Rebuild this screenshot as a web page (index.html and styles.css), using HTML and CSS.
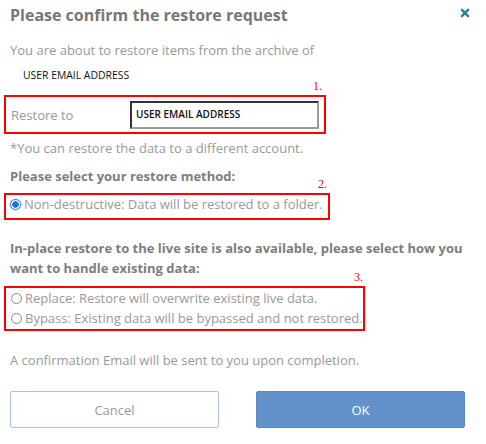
FILE: index.html
```html
<!DOCTYPE html>
<html>
<head>
<meta charset="utf-8">
<link rel="stylesheet" href="styles.css">
</head>
<body>
<div class="dialog">
  <div class="header">
    <h1 class="title">Please confirm the restore request</h1>
    <span class="close" aria-label="Close">
      <svg width="10" height="10" viewBox="0 0 10 10"><path d="M1.2 1.2 L8.8 8.8 M8.8 1.2 L1.2 8.8" stroke="#2f7b95" stroke-width="2.4" stroke-linecap="butt"/></svg>
    </span>
  </div>
  <p class="intro">You are about to restore items from the archive of</p>
  <p class="account">USER EMAIL ADDRESS</p>
  <div class="marked">
    <span class="num n1">1.</span>
    <div class="box box1">
      <span class="label">Restore to</span>
      <div class="input">USER EMAIL ADDRESS</div>
    </div>
  </div>
  <p class="note">*You can restore the data to a different account.</p>
  <p class="heading h1">Please select your restore method:</p>
  <div class="marked">
    <span class="num n2">2.</span>
    <div class="box box2">
      <label class="opt"><span class="radio checked"></span>Non-destructive: Data will be restored to a folder.</label>
    </div>
  </div>
  <p class="heading h2">In-place restore to the live site is also available, please select how you want to handle existing data:</p>
  <div class="marked">
    <span class="num n3">3.</span>
    <div class="box box3">
      <label class="opt"><span class="radio"></span>Replace: Restore will overwrite existing live data.</label>
      <label class="opt"><span class="radio"></span>Bypass: Existing data will be bypassed and not restored.</label>
    </div>
  </div>
  <p class="confirm">A confirmation Email will be sent to you upon completion.</p>
  <div class="buttons">
    <button class="btn cancel">Cancel</button>
    <button class="btn ok">OK</button>
  </div>
</div>
</body>
</html>
```
FILE: styles.css
```css
html, body {
  margin: 0;
  padding: 0;
  background: #ffffff;
}
.dialog {
  width: 486px;
  height: 444px;
  box-sizing: border-box;
  padding: 0 0 0 10px;
  font-family: "Open Sans", "Liberation Sans", sans-serif;
  color: #999999;
  font-size: 13px;
  overflow: hidden;
}
p { margin: 0; }
.header {
  display: flex;
  justify-content: space-between;
  align-items: flex-start;
  padding-top: 4px;
  padding-right: 16px;
}
.title {
  margin: 0;
  font-size: 16px;
  font-weight: 700;
  color: #777777;
  line-height: 22px;
}
.close {
  display: block;
  margin-top: 4px;
  width: 10px;
  height: 10px;
}
.close svg { display: block; }
.intro {
  margin-top: 14px;
  line-height: 20px;
}
.account {
  margin-top: 8px;
  margin-left: 13px;
  font-size: 10.4px;
  color: #111111;
  line-height: 14px;
}
.marked {
  position: relative;
  margin-left: -6px;
}
.num {
  position: absolute;
  top: -15px;
  font-family: "Liberation Serif", serif;
  font-size: 12px;
  color: #ff0000;
  line-height: 12px;
}
.n1 { left: 309px; }
.n2 { left: 314px; }
.n3 { left: 350px; }
.box {
  border: 2px solid #ff0000;
  box-sizing: border-box;
}
.box1 {
  margin-top: 13px;
  width: 322px;
  height: 39px;
  display: flex;
  align-items: center;
  padding-left: 5px;
}
.label {
  width: 119px;
  line-height: 20px;
}
.input {
  width: 189px;
  height: 28px;
  box-sizing: border-box;
  border-style: solid;
  border-width: 2px;
  border-color: #333333 #9a9a9a #9a9a9a #333333;
  font-size: 10px;
  font-weight: 600;
  color: #111111;
  padding-left: 4px;
  line-height: 23px;
}
.note {
  margin-top: 4px;
  line-height: 20px;
}
.heading {
  font-weight: 700;
  color: #7d7d7d;
  line-height: 20px;
}
.h1 {
  margin-top: 8px;
}
.box2 {
  margin-top: 7px;
  width: 326px;
  height: 27px;
  padding: 0 0 0 2px;
}
.box2 .opt {
  line-height: 18px;
}
.opt {
  display: flex;
  align-items: center;
  line-height: 20px;
  white-space: nowrap;
}
.radio {
  width: 11px;
  height: 11px;
  box-sizing: border-box;
  border: 1px solid #888888;
  border-radius: 50%;
  margin: 0 3px 0 2px;
  flex: none;
}
.radio.checked {
  border: 1px solid #2c7be5;
  background: radial-gradient(circle, #1a73e8 0 3px, #ffffff 3.5px);
  box-shadow: 0 0 0 0.5px #9bbcf0;
}
.h2 {
  margin-top: 18px;
  line-height: 20px;
}
.box3 {
  margin-top: 8px;
  width: 361px;
  height: 45px;
  padding: 0 0 0 3px;
}
.confirm {
  margin-top: 19px;
  line-height: 20px;
}
.buttons {
  display: flex;
  gap: 37px;
  margin-top: 21px;
}
.btn {
  width: 209px;
  height: 37px;
  border-radius: 2px;
  font-family: "Open Sans", "Liberation Sans", sans-serif;
  font-size: 13px;
  cursor: pointer;
}
.cancel {
  background: #ffffff;
  border: 1px solid #a6c1e6;
  color: #999999;
}
.ok {
  background: #6391c9;
  border: 1px solid #5a88c2;
  color: #ffffff;
}
```
